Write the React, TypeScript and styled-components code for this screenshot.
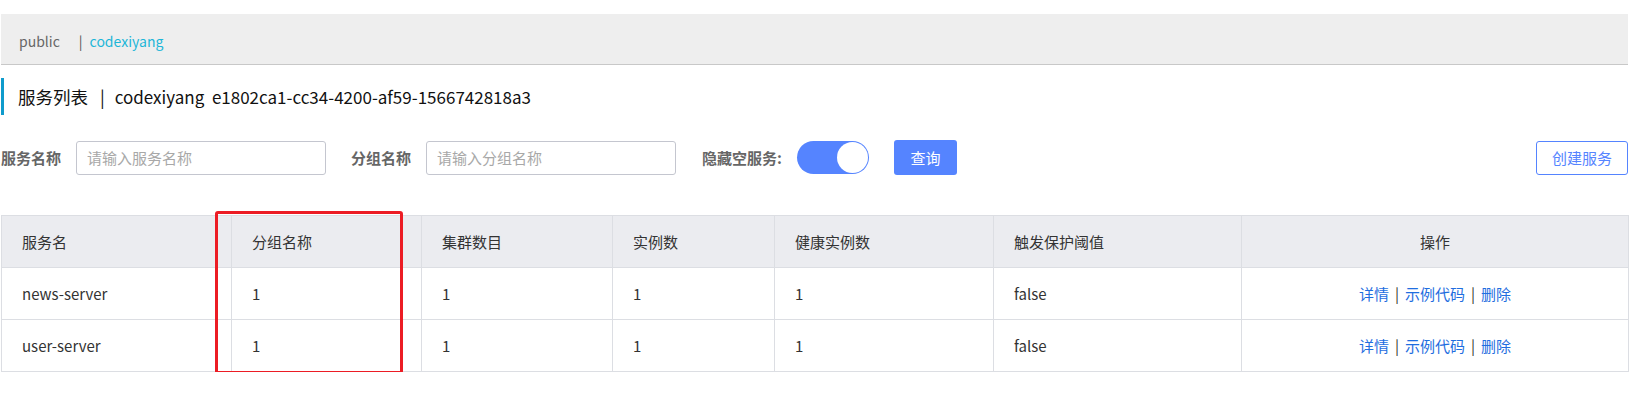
import styled, { createGlobalStyle } from "styled-components";

const GlobalStyle = createGlobalStyle`
  body {
    margin: 0;
    background: #fff;
    font-family: "Noto Sans CJK SC", "Liberation Sans", sans-serif;
    color: #333;
  }
  * {
    box-sizing: border-box;
  }
`;

const Page = styled.div`
  padding: 14px 11px 0 1px;
`;

const NamespaceBar = styled.div`
  height: 51px;
  background-color: #eeeeee;
  border-bottom: 1px solid #c8c8c8;
  display: flex;
  align-items: center;
  padding: 3px 0 0 18px;
  font-size: 14px;
`;

const NsItem = styled.span<{ active?: boolean }>`
  color: ${(props) => (props.active ? "#1db6d8" : "#666")};
`;

const NsDivider = styled.span`
  color: #555;
  margin: 0 7px 0 19px;
`;

const PageTitle = styled.div`
  margin-top: 13px;
  height: 37px;
  border-left: 3px solid #0f9bcc;
  padding-left: 14px;
  display: flex;
  align-items: center;
  font-size: 17.5px;
  color: #111;
`;

const TitleSep = styled.span`
  margin: 0 10px 0 12px;
`;

const TitleMeta = styled.span`
  font-size: 17px;
  white-space: pre;
`;

const FilterBar = styled.div`
  margin-top: 25px;
  display: flex;
  align-items: center;
  height: 35px;
`;

const Label = styled.span<{ gap?: number }>`
  font-size: 15px;
  font-weight: bold;
  color: #666;
  margin-left: ${(props) => props.gap || 0}px;
  margin-right: 15px;
`;

const Input = styled.input`
  width: 250px;
  height: 34px;
  border: 1px solid #c4c6cf;
  border-radius: 3px;
  padding: 0 10px;
  font-size: 15px;
  font-family: inherit;
  outline: none;
  &::placeholder {
    color: #a8a8a8;
  }
`;

const Switch = styled.div<{ on?: boolean }>`
  width: 72px;
  height: 33px;
  border-radius: 17px;
  background-color: ${(props) => (props.on ? "#5584ff" : "#c4c6cf")};
  display: flex;
  align-items: center;
  justify-content: ${(props) => (props.on ? "flex-end" : "flex-start")};
  padding: 0 1px;
`;

const Knob = styled.span`
  width: 31px;
  height: 31px;
  border-radius: 50%;
  background-color: #fff;
`;

const PrimaryButton = styled.button`
  margin-left: 25px;
  width: 63px;
  height: 35px;
  border: none;
  border-radius: 3px;
  background-color: #5584ff;
  color: #fff;
  font-size: 15px;
  font-family: inherit;
`;

const OutlineButton = styled.button`
  margin-left: auto;
  width: 92px;
  height: 34px;
  border: 1px solid #5584ff;
  border-radius: 3px;
  background-color: #fff;
  color: #5584ff;
  font-size: 15px;
  font-family: inherit;
`;

const TableWrap = styled.div`
  margin-top: 40px;
  position: relative;
`;

const Table = styled.table`
  width: 100%;
  border-collapse: collapse;
  table-layout: fixed;
  font-size: 15px;
  color: #333;
`;

const Th = styled.th<{ center?: boolean }>`
  height: 52px;
  padding: 0 20px;
  background-color: #ebecf0;
  border: 1px solid #dcdee3;
  font-weight: normal;
  text-align: ${(props) => (props.center ? "center" : "left")};
`;

const Td = styled.td<{ center?: boolean }>`
  height: 52px;
  padding: 0 20px;
  border: 1px solid #dcdee3;
  text-align: ${(props) => (props.center ? "center" : "left")};
`;

const Link = styled.a`
  color: #1f6ee0;
  text-decoration: none;
`;

const Sep = styled.span`
  color: #333;
  margin: 0 6px;
`;

const Highlight = styled.div`
  position: absolute;
  left: 214px;
  top: -4px;
  width: 188px;
  height: 163px;
  border: 3px solid #ec1c24;
  border-radius: 3px;
  pointer-events: none;
`;

const columns = [
  { title: "服务名", width: 230 },
  { title: "分组名称", width: 190 },
  { title: "集群数目", width: 191 },
  { title: "实例数", width: 162 },
  { title: "健康实例数", width: 219 },
  { title: "触发保护阈值", width: 248 },
  { title: "操作", width: 387, center: true },
];

const services = [
  { name: "news-server", group: "1", clusters: 1, instances: 1, healthy: 1, threshold: "false" },
  { name: "user-server", group: "1", clusters: 1, instances: 1, healthy: 1, threshold: "false" },
];

const App = () => {
  return (
    <Page>
      <GlobalStyle />
      <NamespaceBar>
        <NsItem>public</NsItem>
        <NsDivider>|</NsDivider>
        <NsItem active>codexiyang</NsItem>
      </NamespaceBar>
      <PageTitle>
        <span>服务列表</span>
        <TitleSep>|</TitleSep>
        <TitleMeta>{"codexiyang  e1802ca1-cc34-4200-af59-1566742818a3"}</TitleMeta>
      </PageTitle>
      <FilterBar>
        <Label>服务名称</Label>
        <Input placeholder="请输入服务名称" />
        <Label gap={25}>分组名称</Label>
        <Input placeholder="请输入分组名称" />
        <Label gap={26}>隐藏空服务:</Label>
        <Switch on>
          <Knob />
        </Switch>
        <PrimaryButton>查询</PrimaryButton>
        <OutlineButton>创建服务</OutlineButton>
      </FilterBar>
      <TableWrap>
        <Table>
          <colgroup>
            {columns.map((col) => (
              <col key={col.title} style={{ width: col.width }} />
            ))}
          </colgroup>
          <thead>
            <tr>
              {columns.map((col) => (
                <Th key={col.title} center={col.center}>
                  {col.title}
                </Th>
              ))}
            </tr>
          </thead>
          <tbody>
            {services.map((s) => (
              <tr key={s.name}>
                <Td>{s.name}</Td>
                <Td>{s.group}</Td>
                <Td>{s.clusters}</Td>
                <Td>{s.instances}</Td>
                <Td>{s.healthy}</Td>
                <Td>{s.threshold}</Td>
                <Td center>
                  <Link>详情</Link>
                  <Sep>|</Sep>
                  <Link>示例代码</Link>
                  <Sep>|</Sep>
                  <Link>删除</Link>
                </Td>
              </tr>
            ))}
          </tbody>
        </Table>
        <Highlight />
      </TableWrap>
    </Page>
  );
};

export default App;
